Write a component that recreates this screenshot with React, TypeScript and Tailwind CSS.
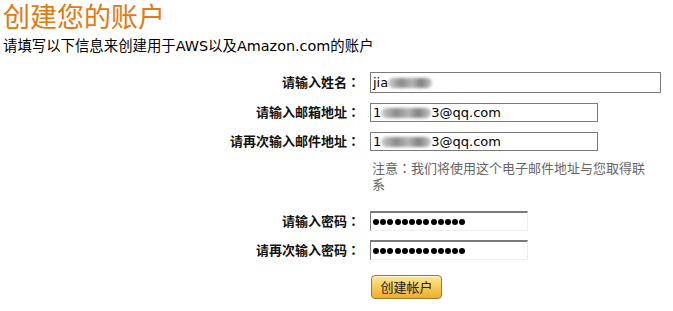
import React from "react";

function Blur({ w }: { w: number }) {
  return (
    <span
      className="inline-block h-[10px] rounded-full bg-[linear-gradient(90deg,#d0d0d0,#8a8a8a_30%,#b5b5b5_55%,#808080_75%,#c8c8c8)] blur-[1.5px] align-middle"
      style={{ width: w }}
    />
  );
}

function Dots() {
  return (
    <div className="flex gap-[1.2px] items-center">
      {Array.from({ length: 13 }).map((_, i) => (
        <span key={i} className="w-[6px] h-[6px] rounded-full bg-black" />
      ))}
    </div>
  );
}

function Colon() {
  return <span className="font-['Noto_Sans_CJK_TC',sans-serif]">：</span>;
}

function Label({ children }: { children: React.ReactNode }) {
  return (
    <div className="w-[357px] shrink-0 text-right font-bold text-[13px] leading-[16px] text-[#111]">
      {children}
      <Colon />
    </div>
  );
}

export default function App() {
  return (
    <div className="w-[673px] h-[311px] overflow-hidden bg-white pl-[3px] font-['DejaVu_Sans','Noto_Sans_CJK_SC',sans-serif] text-black">
      <h1 className="text-[27px] leading-[31px] text-[#e47911] font-normal font-['Noto_Sans_CJK_SC',sans-serif]">
        创建您的账户
      </h1>
      <p className="mt-[7px] text-[14.4px] leading-[16px]">
        请填写以下信息来创建用于AWS以及Amazon.com的账户
      </p>

      <div className="mt-[18px] flex flex-col">
        <div className="flex items-center">
          <Label>请输入姓名</Label>
          <div className="ml-[10px] w-[291px] h-[21px] border border-[#7a7a7a] flex items-center pl-[2px] text-[13px]">
            <span>jia</span>
            <Blur w={44} />
          </div>
        </div>

        <div className="mt-[10px] flex items-center">
          <Label>请输入邮箱地址</Label>
          <div className="ml-[10px] w-[228px] h-[19px] border border-[#7a7a7a] flex items-center pl-[2px] text-[13px]">
            <span>1</span>
            <Blur w={50} />
            <span>3@qq.com</span>
          </div>
        </div>

        <div className="mt-[10px] flex items-center">
          <Label>请再次输入邮件地址</Label>
          <div className="ml-[10px] w-[228px] h-[19px] border border-[#7a7a7a] flex items-center pl-[2px] text-[13px]">
            <span>1</span>
            <Blur w={50} />
            <span>3@qq.com</span>
          </div>
        </div>

        <div className="mt-[9px] ml-[369px] w-[285px] text-[13px] leading-[16px] text-[#666] font-['Noto_Sans_CJK_TC',sans-serif]">
          注意：我们将使用这个电子邮件地址与您取得联系
        </div>

        <div className="mt-[19px] flex items-center">
          <Label>请输入密码</Label>
          <div className="ml-[10px] w-[158px] h-[20px] border-t-2 border-l border-r border-b border-t-[#7a7a7a] border-l-[#7a7a7a] border-r-[#eeeeee] border-b-[#eeeeee] flex items-center pl-[2px]">
            <Dots />
          </div>
        </div>

        <div className="mt-[9px] flex items-center">
          <Label>请再次输入密码</Label>
          <div className="ml-[10px] w-[158px] h-[20px] border-t-2 border-l border-r border-b border-t-[#7a7a7a] border-l-[#7a7a7a] border-r-[#eeeeee] border-b-[#eeeeee] flex items-center pl-[2px]">
            <Dots />
          </div>
        </div>

        <div className="mt-[15px] ml-[368px]">
          <button className="w-[71px] h-[24px] rounded-[4px] border border-[#9c7c2c] bg-[linear-gradient(180deg,#fde7a0_0%,#f8cf5c_45%,#f0ad2c_100%)] text-[13px] leading-[16px] text-[#222] font-['Noto_Sans_CJK_SC',sans-serif] shadow-[inset_0_1px_0_#fff6cf]">
            创建帐户
          </button>
        </div>
      </div>
    </div>
  );
}
